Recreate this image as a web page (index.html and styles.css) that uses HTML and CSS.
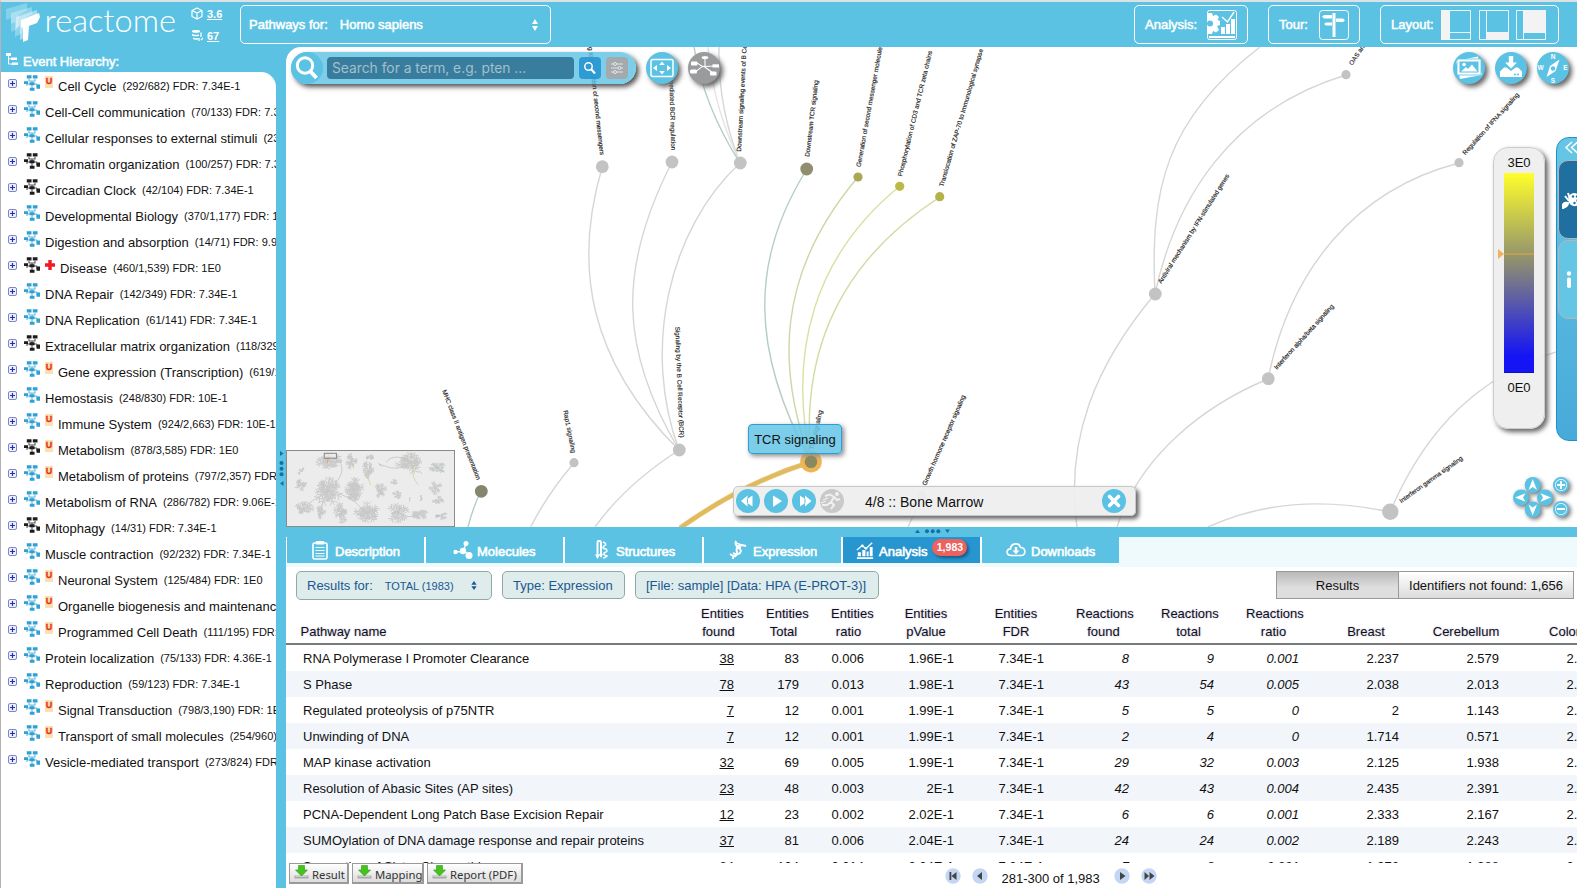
FILE: index.html
```html
<!DOCTYPE html>
<html lang="en">
<head>
<meta charset="utf-8">
<title>Reactome Pathway Browser</title>
<link rel="stylesheet" href="styles.css">
</head>
<body>
<svg class="defs" width="0" height="0">
  <symbol id="pathway" viewBox="0 0 16 16">
    <path d="M5 4V6H11V4M8 6V14M3 9H13M3 9V11M13 9V12" fill="none" stroke="currentColor" stroke-width="1.100" opacity=".75"/>
    <path d="M2.800 .2H7.500V3.500H2.800ZM8.800 .2H13.500V3.500H8.800ZM0 6.300H4V9H0ZM5.500 7.200H10.500V10.300H5.500ZM5.800 12.800H10.500V15.800H5.800ZM12.500 9.500H16V13.700H12.500Z" fill="currentColor"/>
  </symbol>
  <symbol id="chart" viewBox="0 0 20 20">
    <path d="M1 17.500H19V19.500H1ZM2 12H5.500V16.500H2ZM7 9.500H10.500V16.500H7ZM11.800 11H14V16.500H11.800ZM15.300 6H18.500V16.500H15.300Z" fill="currentColor"/>
    <path d="M1 9.500L7 4.500L11 8L18 1.500" fill="none" stroke="currentColor" stroke-width="1.500"/><circle cx="7" cy="4.800" r="1.600" fill="currentColor"/><circle cx="11" cy="7.600" r="1.500" fill="currentColor"/>
  </symbol>
  <symbol id="save" viewBox="0 0 15 14">
    <path d="M.5 10.500H14.500V13.500H.5Z" fill="#a9a9a9"/><path d="M1.500 11.200H13.500" stroke="#ddd" stroke-width="1"/>
    <path d="M4.500 .5H10.500V5H13.500L7.500 11L1.500 5H4.500Z" fill="#45c21c" stroke="#2f9a12" stroke-width=".6"/>
  </symbol>
</svg>

<header class="top">
  <svg class="logo" width="178" height="45" viewBox="0 0 178 45">
    <path d="M5 9L26 3V10L18 15L17 29L10 32V18L5 20Z" fill="#fff" opacity=".25"/>
    <path d="M10 13L31 7V14L24 18L21 33L14 37V22L10 24Z" fill="#fff" opacity=".3"/>
    <path d="M15 17L36 10V16L28 21L25 37L19 40V26L15 28Z" fill="#fff" opacity=".45"/>
    <path d="M20 20L38 13L39 17L36 23L28 26L27 40L22 42V27L20 28Z" fill="#fff"/>
    <text x="43.500" y="32" textLength="131.500" lengthAdjust="spacingAndGlyphs" class="word">reactome</text>
  </svg>
  <div class="versions">
    <div class="ver"><svg width="12" height="13" viewBox="0 0 12 13"><path d="M6 1L11 3.500V9.500L6 12L1 9.500V3.500ZM1 3.500L6 6L11 3.500M6 6V12" fill="none" stroke="#fff" stroke-width="1.200"/></svg><u>3.6</u></div>
    <div class="ver"><svg width="12" height="13" viewBox="0 0 12 13"><path d="M1 2C1 .7 9 .7 9 2V3C9 4 1 4 1 3ZM1 5C3 6 7 6 8 5.500V7C6 7.500 3 7.500 1 6.500ZM2 8.500C4 9.500 5 9.500 7 9V10.500C5 11 3 10.500 2 10Z" fill="#fff"/><path d="M10 3.500V8M8 9V12M10 11L12 9" stroke="#fff" stroke-width="1.300"/></svg><u>67</u></div>
  </div>
  <div class="box species"><span>Pathways for:</span><span class="val">Homo sapiens</span><svg class="updown" width="8" height="12" viewBox="0 0 8 12"><path d="M4 0L7 5H1ZM1 7H7L4 12Z" fill="#fff"/></svg></div>
  <div class="spacer"></div>
  <div class="box analysis">Analysis:
    <svg width="30" height="30" viewBox="0 0 30 30"><rect x=".5" y=".5" width="29" height="29" rx="2" fill="none" stroke="#fff"/><g fill="#fff"><path d="M1 3H5L6 6L9 4.500L12 7L10.500 10L13 11V15L10 16L12 20L9 22.500L6 21L5 24H1Z"/><path d="M14 17H18V24H14ZM19 14H23V24H19ZM24 9H28V24H24ZM2 26H28V28H2Z"/></g><circle cx="3" cy="13.500" r="3" fill="#5bc2e3"/><path d="M15 7L20.500 12L27 2" fill="none" stroke="#fff" stroke-width="1.400"/></svg></div>
  <div class="box tour">Tour:
    <svg width="30" height="30" viewBox="0 0 30 30"><rect x=".5" y=".5" width="29" height="29" rx="3" fill="none" stroke="#fff"/><path d="M13.500 3H16.500V27H13.500ZM5 5H13V8.500H5L3 6.700ZM17 8.500H24L26 10.200L24 12H17ZM7 12.500H13V15.500H7L5 14Z" fill="#fff"/></svg></div>
  <div class="box layout">Layout:
    <svg width="30" height="30" viewBox="0 0 30 30"><path d="M.5 .5H29.500V29.500H.5ZM8.500 0V30M8 22.500H30" fill="none" stroke="#eaf7fb"/><path d="M0 0H8V30H0Z" fill="#f3f3f3"/></svg>
    <svg width="30" height="30" viewBox="0 0 30 30"><path d="M.5 .5H29.500V29.500H.5ZM7.500 0V30M8 22.500H30" fill="none" stroke="#eaf7fb"/><path d="M8 22H30V30H8Z" fill="#f3f3f3"/></svg>
    <svg width="30" height="30" viewBox="0 0 30 30"><path d="M.5 .5H29.500V29.500H.5ZM7.500 0V30M8 22.500H30" fill="none" stroke="#eaf7fb"/><path d="M8 0H30V22.500H8Z" fill="#f3f3f3"/></svg>
  </div>
</header>

<main class="main">
  <aside class="side">
    <h2 class="side-title"><svg width="12" height="13" viewBox="0 0 12 13"><path d="M0 0H5V3H0ZM5 4.500H11V7H5ZM6 9.500H12V12H6Z" fill="#fff"/><path d="M2.500 3V11H6M2.500 5.800H5" fill="none" stroke="#fff"/></svg>Event Hierarchy:</h2>
    <div class="tree" id="tree"></div>
  </aside>
  <div class="vsplit"><svg width="8" height="36" viewBox="0 0 8 36"><g fill="#1272a8"><path d="M3 1L6.500 3.500L3 6ZM6.500 31L3 33.500L6.500 36Z"/><circle cx="4.500" cy="13" r="2"/><circle cx="4.500" cy="18.700" r="2"/><circle cx="4.500" cy="24.300" r="2"/></g></svg></div>

  <section class="work">
    <div class="diagram">
      <svg class="graph" width="1291" height="480" viewBox="286 47 1291 480">
        <g fill="none" stroke="#d6d6d6" stroke-width="1.400">
          <path d="M602.300 166.700C573 265 588 360 679 450"/><path d="M672 162C617 270 620 350 679 450"/><path d="M740 163C668 230 642 350 679 450"/>
          <path d="M679 450Q625 485 595 527"/><path d="M574 463Q548 493 530.700 527"/>
          <path d="M719 47C718 90 727 130 740 163"/><path d="M708 47C712 95 725 130 740 163" stroke="#e4e4e4"/>
          <path d="M1155 294C1150 190 1165 120 1260 47"/><path d="M1155 294C1175 200 1230 110 1346 75"/><path d="M1155 294C1095 365 1065 440 1077 527"/>
          <path d="M1268 379C1290 270 1355 190 1459 163"/><path d="M1268 379C1205 405 1140 455 1117 527"/>
          <path d="M1390 512C1320 497 1260 503 1208 527"/><path d="M1390 512C1425 430 1480 370 1577 346"/><path d="M922 496L908 527"/>
        </g>
        <g fill="none" stroke-width="1.400">
          <path d="M807 169C750 260 750 350 811 462" stroke="#b3cfc0"/><path d="M694 47C702 95 722 135 740 163" stroke="#b3cfc0"/><path d="M481 491Q473 507 468 527" stroke="#b3cfc0"/>
          <path d="M858 177C775 275 777 370 811 462" stroke="#c9d8a6"/><path d="M900 186C815 255 787 350 811 462" stroke="#dcdf9f"/><path d="M940 197C850 255 799 340 811 462" stroke="#d2dba3"/>
          <path d="M811 462Q745 482 680 528" stroke="#f2bb64" stroke-width="5"/><path d="M811 462Q745 482 680 528" stroke="#d9bd62" stroke-width="3"/>
        </g>
        <g fill="#c3c3c3">
          <circle cx="602.300" cy="166.700" r="6.400"/><circle cx="672" cy="162" r="6.400"/><circle cx="740.300" cy="163" r="6.400"/>
          <circle cx="574" cy="462.700" r="4.600"/><circle cx="679.300" cy="450" r="6.400"/><circle cx="1155.300" cy="294" r="6.400"/>
          <circle cx="1268.300" cy="378.700" r="6.400"/><circle cx="1459" cy="162.700" r="4.600"/><circle cx="1390.300" cy="511.700" r="8.200"/>
          <circle cx="1346" cy="74.700" r="4.600"/><circle cx="922" cy="495.700" r="4.600"/>
        </g>
        <circle cx="806.700" cy="169" r="6.400" fill="#8f8f70"/><circle cx="858" cy="177" r="4.600" fill="#aaa852"/>
        <circle cx="899.700" cy="186.300" r="4.600" fill="#bdb946"/><circle cx="939.700" cy="196.700" r="4.600" fill="#b4b04a"/>
        <circle cx="481.300" cy="491.300" r="6.400" fill="#86866f"/>
        <circle cx="811" cy="461.700" r="10.800" fill="#f0b455"/><circle cx="811" cy="461.700" r="6.300" fill="#89895c"/>
        <g class="labels">
          <text transform="translate(809.300 157)rotate(-83.300)" textLength="77">Downstream TCR signaling</text>
          <text transform="translate(860.500 167.300)rotate(-79.700)">Generation of second messenger molecules</text>
          <text transform="translate(902 176.700)rotate(-76.400)" textLength="129">Phosphorylation of CD3 and TCR zeta chains</text>
          <text transform="translate(943.300 187)rotate(-73.800)" textLength="143">Translocation of ZAP-70 to Immunological synapse</text>
          <text transform="translate(741 151.700)rotate(-87)">Downstream signaling events of B Cell Receptor (BCR)</text>
          <text transform="translate(600 155.300)rotate(83.800)" text-anchor="end">Antigen activates B Cell Receptor (BCR) leading to generation of second messengers</text>
          <text transform="translate(671.300 150.300)rotate(88.500)" text-anchor="end">CD22 mediated BCR regulation</text>
          <text transform="translate(675.300 326.700)rotate(87.800)" textLength="111">Signaling by the B Cell Receptor (BCR)</text>
          <text transform="translate(563.300 410.700)rotate(79)" textLength="43.400">Rap1 signaling</text>
          <text transform="translate(442 390.700)rotate(68.800)" textLength="96">MHC class II antigen presentation</text>
          <text transform="translate(813.500 450)rotate(-77)">TCR signaling</text>
          <text transform="translate(926 486)rotate(-66.200)" textLength="98">Growth hormone receptor signaling</text>
          <text transform="translate(1352.300 65.700)rotate(-56)">OAS antiviral response</text>
          <text transform="translate(1465.300 155.300)rotate(-48)" textLength="81">Regulation of IFNA signaling</text>
          <text transform="translate(1161.300 284)rotate(-57.800)" textLength="128">Antiviral mechanism by IFN-stimulated genes</text>
          <text transform="translate(1276.700 370)rotate(-47.800)" textLength="85.500">Interferon alpha/beta signaling</text>
          <text transform="translate(1401.300 503.300)rotate(-35.400)" textLength="76">Interferon gamma signaling</text>
        </g>
      </svg>

      <div class="search">
        <span class="search-ico"><svg width="32" height="32" viewBox="0 0 32 32"><circle cx="14" cy="13.500" r="7.700" fill="none" stroke="#fff" stroke-width="3"/><path d="M19.500 19.500L25.500 26" stroke="#fff" stroke-width="4"/></svg></span>
        <span class="field">Search for a term, e.g. pten ...</span>
        <span class="sbtn go"><svg width="22" height="22" viewBox="0 0 22 22"><circle cx="9.500" cy="9.500" r="3.700" fill="none" stroke="#fff" stroke-width="1.500"/><path d="M12 12L16 16.500" stroke="#fff" stroke-width="2.200"/></svg></span>
        <span class="sbtn opt"><svg width="22" height="22" viewBox="0 0 22 22"><path d="M5 7H17M5 11H17M5 15H17" stroke="#e6e6e6" stroke-width="1.200"/><g fill="#a8a8a8" stroke="#e6e6e6"><circle cx="9" cy="7" r="1.500"/><circle cx="13.500" cy="11" r="1.500"/><circle cx="9" cy="15" r="1.500"/></g></svg></span>
      </div>
      <div class="round fit"><svg width="32" height="32" viewBox="0 0 32 32"><rect x="5" y="7.500" width="22" height="17" rx="2" fill="none" stroke="#fff" stroke-width="1.500"/><path d="M16 9.500L18.800 13H13.200ZM16 22.500L18.800 19H13.200ZM7 16L11 13V19ZM25 16L21 13V19Z" fill="#fff"/></svg></div>
      <div class="round gray"><svg width="32" height="32" viewBox="0 0 32 32"><path d="M8 11C13 11.500 11 14.500 16 14.500L28 14M7 19C11 19 11 15.500 15 14.500M16 14.500L25 21M17 5V14.500" fill="none" stroke="#fff" stroke-width="1.100"/><g fill="#fff"><ellipse cx="17" cy="5.500" rx="3.300" ry="1.500"/><rect x="3" y="9.500" width="6.500" height="4" rx="1"/><rect x="2" y="17.500" width="7" height="4" rx="1.500"/><rect x="24.500" y="12.300" width="6.500" height="3.200"/><rect x="22" y="19.500" width="6.500" height="4" rx="1"/></g></svg></div>
      <div class="round pic"><svg width="32" height="32" viewBox="0 0 32 32"><path d="M3 9L25 4.500L29 23L7 27Z" fill="#fff"/><rect x="4" y="7" width="24" height="16" fill="#fff" stroke="#5bc2e3" stroke-width=".8"/><rect x="6.500" y="9.500" width="19" height="11" fill="#5bc2e3"/><circle cx="11" cy="12.500" r="1.800" fill="#fff"/><path d="M8 19.500L13 15L15 17L19 12.500L24.500 19.500Z" fill="#fff"/></svg></div>
      <div class="round down"><svg width="32" height="32" viewBox="0 0 32 32"><path d="M13.800 4H18.200V10.500H22L16 16.500L10 10.500H13.800ZM5 19.500L9 15.500H11.500L16 19L20.500 15.500H23L27 19.500V25H5Z" fill="#fff"/><path d="M19 22.500H24" stroke="#5bc2e3" stroke-width="1.500" stroke-dasharray="2 1"/></svg></div>
      <div class="round compass"><svg width="32" height="32" viewBox="0 0 32 32"><path d="M22.500 7.500L18.500 19L9.500 25L13 14Z" fill="#fff"/><circle cx="16" cy="16.500" r="2.200" fill="#5bc2e3"/><g class="nsew"><text x="16" y="6.800">N</text><text x="16" y="31">S</text><text x="3.500" y="18.200">W</text><text x="28.500" y="18.200">E</text></g></svg></div>

      <div class="legend"><span>3E0</span><div class="ramp"><i class="mark"></i></div><span>0E0</span></div>
      <div class="settings">
        <svg class="chev" width="16" height="14" viewBox="0 0 16 14"><path d="M9 1L3 6.500L9 12M14.500 1L8.500 6.500L14.500 12" fill="none" stroke="#fff" stroke-width="1.500"/></svg>
        <div class="stab dark"><svg width="18" height="18" viewBox="0 0 18 18"><path d="M9 3C14 0 19 4 18 10C17 16 12 16 9 14C6 12 5 5 9 3Z" fill="#fff"/><path d="M3 5L7 10M6 2L8 8M1 17C0 13 2 11 6 12C6 15 4 16 1 17Z" fill="#fff" stroke="#fff" stroke-width="2"/><g fill="#1f70a0"><circle cx="11" cy="5.500" r="1.200"/><circle cx="15" cy="5.500" r="1.200"/><circle cx="15.500" cy="9.500" r="1.200"/><circle cx="12.500" cy="12" r="1.200"/></g></svg></div>
        <div class="stab light"><svg width="16" height="18" viewBox="0 0 16 18"><circle cx="9" cy="2.500" r="2.200" fill="#fff"/><rect x="7" y="6.500" width="4" height="10.500" rx="1.800" fill="#fff"/></svg></div>
      </div>
      <svg class="nav" width="66" height="46" viewBox="1511 474 66 46">
        <g fill="#5bc2e3"><circle cx="1532.700" cy="485" r="8"/><circle cx="1521" cy="497.500" r="8"/><circle cx="1545" cy="497.500" r="8"/><circle cx="1532.700" cy="509.500" r="8"/></g>
        <path d="M1532.700 479L1537 490L1532.700 487L1528.500 490ZM1532.700 515.500L1537 504.500L1532.700 507.500L1528.500 504.500ZM1515 497.500L1525.500 493.200L1523 497.500L1525.500 501.700ZM1551 497.500L1540.500 493.200L1543 497.500L1540.500 501.700Z" fill="#fff"/>
        <g fill="#fff" stroke="#5bc2e3" stroke-width="2"><circle cx="1561" cy="485" r="7"/><circle cx="1561" cy="509" r="7"/></g>
        <g fill="#5bc2e3"><circle cx="1561" cy="485" r="5.300"/><circle cx="1561" cy="509" r="5.300"/></g>
        <path d="M1557 485H1565M1561 481V489M1557 509H1565" stroke="#fff" stroke-width="1.800"/>
      </svg>
      <div class="tip">TCR signaling</div>
      <div class="player">
        <svg width="108" height="24" viewBox="0 0 108 24"><g fill="#5bc2e3"><circle cx="12" cy="12" r="12"/><circle cx="40" cy="12" r="12"/><circle cx="68" cy="12" r="12"/></g><circle cx="96" cy="12" r="12" fill="#c9c9c9"/>
          <path d="M5 12L11.500 6.500V10L16.500 6.500V17.500L11.500 14V17.500ZM37 6.500L46 12L37 18ZM75.500 12L69 6.500V10L64 6.500V17.500L69 14V17.500Z" fill="#fff"/>
          <path d="M11.500 10V14M69 10V14" stroke="#5bc2e3"/>
          <g fill="none" stroke="#f0f0f0" stroke-width="2"><path d="M89 7L94 5.500L98 8L95 13L98 16L95 20M95 13L91 16H86M98 8L101 11L104 10"/><path d="M87 11L92 9M85 14L90 12" stroke-width="1.300"/></g><circle cx="101" cy="5" r="2" fill="#f0f0f0"/></svg>
        <span class="tissue">4/8 :: Bone Marrow</span>
        <svg width="24" height="24" viewBox="0 0 24 24"><circle cx="12" cy="12" r="12" fill="#5bc2e3"/><path d="M7.500 7.500L16.500 16.500M16.500 7.500L7.500 16.500" stroke="#fff" stroke-width="3.600" stroke-linecap="round"/></svg>
      </div>
      <svg class="thumb" id="thumb" width="169" height="77" viewBox="18 450 507 231"></svg>
    </div>

    <div class="hsplit"><svg width="36" height="8" viewBox="0 0 36 8"><g fill="#1272a8"><path d="M1 6L3.500 2.500L6 6ZM31 2.500H36L33.500 6Z"/><circle cx="13" cy="4.300" r="2"/><circle cx="18.700" cy="4.300" r="2"/><circle cx="24.300" cy="4.300" r="2"/></g></svg></div>

    <nav class="tabs">
      <div class="tab t1"><svg width="16" height="20" viewBox="0 0 16 20"><rect x="1" y="3" width="14" height="16" rx="1.500" fill="none" stroke="#fff" stroke-width="1.600"/><path d="M4 1H12V4.500H4Z" fill="#fff"/><path d="M3.500 7.500H12.500M3.500 10.500H12.500M3.500 13.500H12.500M3.500 16H12.500" stroke="#fff"/></svg>Description</div>
      <div class="tab t2"><svg width="20" height="20" viewBox="0 0 20 20"><path d="M2.500 12L10 11.500L13 4M10 10L16 15" fill="none" stroke="#fff" stroke-width="1.300"/><g fill="#fff"><circle cx="2.500" cy="12" r="2.200"/><circle cx="10" cy="11" r="3.200"/><circle cx="13" cy="3.500" r="2.500"/><circle cx="16" cy="15.500" r="3.500"/></g></svg>Molecules</div>
      <div class="tab t3"><svg width="14" height="20" viewBox="0 0 14 20"><path d="M2.500 16V3C2.500 0 6 0 6 3V17" fill="none" stroke="#fff" stroke-width="2"/><path d="M0 14.500H5L2.500 19ZM4 14H8L6 18Z" fill="#fff"/><path d="M8 2Q13 4 9 6Q6 8 11 9Q14 11 9 13Q8 15 12 16Q10 18 8 18" fill="none" stroke="#fff" stroke-width="1.500"/></svg>Structures</div>
      <div class="tab t4"><svg width="18" height="20" viewBox="0 0 18 20"><path d="M7 1C4 8 15 8 11 13C9 15 4 13 4 19M17 6C11 4 6 7 8 12C9 16 5 17 1 14" fill="none" stroke="#fff" stroke-width="2"/><path d="M7 3L14 5.500M7 5.500L12 8M4 13L9 14.500M3 15.500L7 16.500" fill="none" stroke="#fff" stroke-width="1.500"/></svg>Expression</div>
      <div class="tab t5 on"><svg width="18" height="19" viewBox="0 0 20 20"><use href="#chart"/></svg>Analysis<b class="badge">1,983</b></div>
      <div class="tab t6"><svg width="20" height="16" viewBox="0 0 20 16"><path d="M5.500 13.500C-.5 13.500 0 6.500 4.500 7C5 1 13 0 14.500 5.500C20 5.500 20.500 13.500 15 13.500Z" fill="none" stroke="#fff" stroke-width="1.700"/><path d="M8.800 5H11.200V8.500H13.500L10 12.300L6.500 8.500H8.800Z" fill="#fff"/></svg>Downloads</div>
    </nav>

    <div class="panel">
      <div class="filters">
        <div class="pill p1">Results for:<span class="small">TOTAL (1983)</span><svg width="6" height="11" viewBox="0 0 8 12"><path d="M4 0L7.500 5H.5ZM.5 7H7.500L4 12Z" fill="#1b5790"/></svg></div>
        <div class="pill p2">Type: Expression</div>
        <div class="pill p3">[File: sample] [Data: HPA (E-PROT-3)]</div>
        <div class="seg"><div class="sbt sel">Results</div><div class="sbt">Identifiers not found: 1,656</div></div>
      </div>
      <div class="row head"><span>Pathway name</span><span>Entities found</span><span>Entities Total</span><span>Entities ratio</span><span>Entities pValue</span><span>Entities FDR</span><span>Reactions found</span><span>Reactions total</span><span>Reactions ratio</span><span>Breast</span><span>Cerebellum</span><span>Colon</span></div>
      <div class="rows" id="rows"></div>
      <footer class="foot">
        <div class="btn b1"><svg width="15" height="14"><use href="#save"/></svg>Result</div>
        <div class="btn b2"><svg width="15" height="14"><use href="#save"/></svg>Mapping</div>
        <div class="btn b3"><svg width="15" height="14"><use href="#save"/></svg>Report (PDF)</div>
        <div class="pager">
          <svg width="16" height="16" viewBox="0 0 16 16"><circle cx="8" cy="8" r="7.700" fill="#c3d6f3"/><path d="M4.500 4H6.300V12H4.500ZM11.500 4V12L6.500 8Z" fill="#444"/></svg>
          <svg width="16" height="16" viewBox="0 0 16 16"><circle cx="8" cy="8" r="7.700" fill="#c3d6f3"/><path d="M10 4V12L5 8Z" fill="#444"/></svg>
          <span class="range">281-300 of 1,983</span>
          <svg width="16" height="16" viewBox="0 0 16 16"><circle cx="8" cy="8" r="7.700" fill="#c3d6f3"/><path d="M6 4V12L11.500 8Z" fill="#444"/></svg>
          <svg width="16" height="16" viewBox="0 0 16 16"><circle cx="8" cy="8" r="7.700" fill="#c3d6f3"/><path d="M3.500 4V12L8 8ZM8.500 4V12L13.500 8Z" fill="#444"/></svg>
        </div>
      </footer>
    </div>
  </section>
</main>
<script src="app.js"></script>
</body>
</html>
```
FILE: styles.css
```css
* { box-sizing: border-box; }
body { margin: 0; width: 1577px; height: 888px; overflow: hidden; font: 13px "Liberation Sans", Arial, sans-serif; color: #111; background: #5bc2e3; border-left: 1px solid #b4b4b4; border-top: 2px solid #d9e2e5; display: flex; flex-direction: column; }
.defs { position: absolute; }
svg { display: block; flex: none; }
.top { height: 45px; flex: none; display: flex; align-items: flex-start; padding: 3px 18px 0 0; color: #fff; -webkit-text-stroke: .5px #fff; }
.logo { margin-top: -5px; }
.word { font: 300 32px Lato, sans-serif; fill: #fff; -webkit-text-stroke: .4px #fff; }
.versions { display: flex; flex-direction: column; gap: 9px; margin: 2px 0 0 12px; width: 48px; font-size: 11px; font-weight: bold; -webkit-text-stroke: 0; }
.ver { display: flex; align-items: center; gap: 4px; height: 13px; }
.box { height: 39px; border: 1px solid #fff; border-radius: 5px; display: flex; align-items: center; justify-content: space-between; padding: 0 10px; }
.species { width: 311px; margin-left: 1px; justify-content: flex-start; padding: 0 11px 0 8px; }
.species .val { margin-left: 12px; }
.updown { margin-left: auto; }
.spacer { flex: 1; }
.analysis { width: 114px; margin-right: 20px; }
.tour { width: 92px; margin-right: 20px; }
.layout { width: 179px; padding-right: 12px; }

.main { flex: 1; display: flex; min-height: 0; }
.side { width: 275px; display: flex; flex-direction: column; }
.side-title { margin: 0; height: 25px; padding: 3px 0 0 5px; display: flex; align-items: center; gap: 5px; font-size: 13px; font-weight: normal; color: #fff; -webkit-text-stroke: .5px #fff; }
.side-title svg { margin-top: -3px; }
.tree { flex: 1; background: #fff; border-top-right-radius: 15px; overflow: hidden; padding: 1px 0 0 7px; }
.node { display: flex; align-items: center; height: 26px; white-space: nowrap; }
.node .plus { margin: -6px 7px 0 0; flex: none; width: 9px; height: 9px; }
.node .pw { margin-top: -7px; margin-right: 5px; color: #2fa0d3; }
.node .pw.dis { color: #1c1c1c; }
.node .upd { flex: none; width: 8px; height: 12px; margin: -8px 5px 0 0; background: #fde0b2; color: #e8321a; font: bold 9px/10px "Liberation Sans", sans-serif; text-align: center; -webkit-text-stroke: .3px #e8321a; }
.node .cross { margin: -6px 5px 0 0; }
.node small { font-size: 11px; margin-left: 6px; letter-spacing: .02px; }
.vsplit { width: 10px; padding: 403px 0 0 1px; }

.work { flex: 1; min-width: 0; display: flex; flex-direction: column; }
.diagram { height: 480px; flex: none; position: relative; background: #fff; border-top-left-radius: 15px; overflow: hidden; }
.graph { position: absolute; inset: 0; }
.labels { font: 6.4px "Liberation Sans", sans-serif; fill: #222; stroke: #222; stroke-width: .15px; }
.search { position: absolute; left: 5px; top: 5px; width: 345px; height: 32px; border-radius: 16px; background: rgba(91,194,227,.8); box-shadow: 3px 3px 5px #555; display: flex; align-items: center; }
.search-ico { width: 32px; height: 32px; border-radius: 50%; background: #5bc2e3; margin-right: 4px; }
.field { width: 247px; height: 22px; border-radius: 4px; background: #387d9d; color: #a3c0cc; font: 13.800px/23px Inter, sans-serif; padding-left: 5px; white-space: nowrap; }
.sbtn { width: 22px; height: 22px; border-radius: 4px; margin-left: 5px; }
.go { background: rgba(34,146,208,.85); }
.opt { background: #a3a9ac; }
.round { position: absolute; top: 5px; width: 32px; height: 32px; border-radius: 50%; background: #5bc2e3; box-shadow: 3px 3px 5px #666; }
.fit { left: 360px; }
.gray { left: 402px; background: #9a9b9d; }
.pic { left: 1167px; }
.down { left: 1209px; }
.compass { left: 1251px; }
.nsew { font: bold 6.500px "Liberation Sans", sans-serif; fill: #fff; text-anchor: middle; }
.legend { position: absolute; left: 1207px; top: 100px; width: 52px; height: 282px; border: 1px solid #ccc; border-radius: 15px; background: rgba(238,238,238,.93); box-shadow: 3px 3px 5px #666; display: flex; flex-direction: column; align-items: center; padding-top: 7px; line-height: 15px; }
.ramp { position: relative; width: 30px; height: 200px; margin: 3px 0 7px; background: linear-gradient(#ffff2b, #8f8f70 44%, #1414f5 92%); border-bottom: 1px solid #1010c8; }
.mark { position: absolute; left: 0; top: 80px; width: 30px; height: 2px; background: #c0a050; }
.mark::before { content: ""; position: absolute; left: -6px; top: -4px; border-left: 6px solid #efb45a; border-top: 5px solid transparent; border-bottom: 5px solid transparent; }
.settings { position: absolute; left: 1270px; top: 90px; width: 40px; height: 304px; border: 1px solid #1d90cb; border-radius: 13px; background: linear-gradient(#66c6e5, #47aad9); padding: 0 0 0 1px; }
.chev { margin: 3px 0 5px 5px; }
.stab { width: 40px; height: 79px; margin-bottom: 1px; border: 1px solid #b5b5b5; border-radius: 10px; padding: 30px 0 0 3px; }
.dark { background: #1f70a0; }
.light { background: #64c5e4; padding-left: 1px; }
.nav { position: absolute; left: 1225px; top: 427px; filter: drop-shadow(2px 2px 2px #777); }
.tip { position: absolute; left: 462px; top: 377px; width: 94px; height: 30px; border: 1px solid #2a9fd6; border-radius: 4px; background: rgba(103,198,230,.87); box-shadow: 2px 2px 5px #888; text-align: center; line-height: 29px; }
.player { position: absolute; left: 447px; top: 439px; width: 403px; height: 30px; border: 1px solid #c8c8c8; border-radius: 5px; background: rgba(238,238,238,.93); box-shadow: 3px 3px 4px #666; display: flex; align-items: center; padding: 0 9px 0 2px; }
.tissue { flex: 1; font-size: 14px; padding: 2px 0 0 21px; }
.thumb { position: absolute; left: 0; top: 403px; border: 1px solid #8a8a8a; background: #ececec; }
.hsplit { height: 10px; flex: none; padding: 0 0 0 628px; }
.tabs { height: 30px; flex: none; display: flex; gap: 2px; background: linear-gradient(#fff 26px, #effafc 26px); padding-left: 1px; }
.tabs::after { content: ""; flex: 1; margin-left: -2px; background: #effafc; }
.tab { width: 137px; height: 26px; background: #5bc2e3; color: #fff; -webkit-text-stroke: .6px #fff; display: flex; align-items: center; padding-top: 3px; }
.tab svg { margin-top: -3px; }
.t1 { padding-left: 25px; } .t1 svg { margin-right: 7px; }
.t2 { padding-left: 27px; } .t2 svg { margin-right: 4px; }
.t3 { padding-left: 30px; } .t3 svg { margin-right: 7px; }
.t4 { padding-left: 25px; } .t4 svg { margin-right: 6px; }
.t5 { padding-left: 13px; } .t5 svg { margin-right: 5px; }
.t6 { padding-left: 24px; } .t6 svg { margin-right: 5px; }
.on { background: #2795cf; }
.badge { margin: -8px 0 0 5px; width: 35px; height: 17px; border-radius: 9px; background: #ec625f; font-size: 10.500px; line-height: 17px; text-align: center; -webkit-text-stroke: 0; box-shadow: 2px 2px 3px #1b5a85; }
.panel { flex: 1; background: #fff; display: flex; flex-direction: column; min-height: 0; overflow: hidden; }
.filters { height: 37px; flex: none; display: flex; align-items: flex-start; gap: 10px; padding: 4px 3px 0 10px; }
.pill { height: 28px; border: 1px solid #8fa9a9; border-radius: 5px; background: #deecec; color: #1b5790; display: flex; align-items: center; padding: 0 10px; white-space: nowrap; }
.p1 { width: 196px; height: 29px; padding-right: 14px; }
.p2 { width: 123px; }
.p3 { width: 244px; }
.small { font-size: 11px; margin-left: 12px; }
.p1 svg { margin-left: auto; }
.seg { margin-left: auto; display: flex; }
.sbt { width: 176px; height: 28px; border: 1px solid #999; background: linear-gradient(#fff, #dcdcdc); text-align: center; line-height: 27px; }
.sel { width: 122px; background: linear-gradient(#b9b9b9, #dedede 60%); border-right: 0; }
.row { display: grid; grid-template-columns: 400.500px 65px 65px 65px 90px 90px 85px 85px 85px 100px 100px 100px; width: 1331px; }
.row span { padding: 0 17.500px 0 14.500px; text-align: right; line-height: 28px; white-space: nowrap; }
.row span:first-child { text-align: left; padding-left: 17px; }
.row span:nth-child(2) { text-decoration: underline; }
.rows .row span:nth-child(n+7):nth-child(-n+9) { font-style: italic; }
.head { height: 41px; flex: none; align-items: end; border-bottom: 2px solid #757b7b; padding-bottom: 2px; }
.row.head span { padding: 0 15.500px 0 14.500px; line-height: 18px; white-space: normal; text-align: center; text-decoration: none; text-shadow: 0 0 2px #b5b0e0; }
.row.head span:first-child { text-align: left; }
.rows { height: 218px; flex: none; overflow: hidden; }
.rows .row { height: 26px; }
.rows .row:nth-child(even) { background: #f2f6fb; }
.foot { height: 25px; display: flex; gap: 3px; padding-left: 3px; align-items: flex-start; }
.btn { height: 21px; border: 1px solid #9a9a9a; border-right-width: 2px; border-bottom-width: 2px; background: linear-gradient(#fff, #dcdcdc); font: 11.300px/14px "Noto Sans", sans-serif; color: #333; display: flex; align-items: center; padding: 4px 0 0 4px; white-space: nowrap; }
.btn svg { margin: -7px 3px 0 0; }
.b1 { width: 60px; } .b2 { width: 72px; } .b3 { width: 96px; }
.pager { display: flex; gap: 11px; margin: 5px 0 0 418.500px; }
.pager .range { width: 98px; margin: 3px 3px 0 3px; white-space: nowrap; }
```
FILE: app.js
```js
const tree = [
  ["Cell Cycle", "(292/682) FDR: 7.34E-1", "u"], ["Cell-Cell communication", "(70/133) FDR: 7.34E-1", ""],
  ["Cellular responses to external stimuli", "(237/579) FDR: 7.34E-1", ""], ["Chromatin organization", "(100/257) FDR: 7.34E-1", "d"],
  ["Circadian Clock", "(42/104) FDR: 7.34E-1", "d"], ["Developmental Biology", "(370/1,177) FDR: 1E0", ""],
  ["Digestion and absorption", "(14/71) FDR: 9.9E-1", ""], ["Disease", "(460/1,539) FDR: 1E0", "dx"],
  ["DNA Repair", "(142/349) FDR: 7.34E-1", ""], ["DNA Replication", "(61/141) FDR: 7.34E-1", ""],
  ["Extracellular matrix organization", "(118/329) FDR: 7.34E-1", "d"], ["Gene expression (Transcription)", "(619/1,843) FDR: 1E0", "u"],
  ["Hemostasis", "(248/830) FDR: 10E-1", ""], ["Immune System", "(924/2,663) FDR: 10E-1", "u"],
  ["Metabolism", "(878/3,585) FDR: 1E0", "du"], ["Metabolism of proteins", "(797/2,357) FDR: 1E0", "u"],
  ["Metabolism of RNA", "(286/782) FDR: 9.06E-1", ""], ["Mitophagy", "(14/31) FDR: 7.34E-1", "d"],
  ["Muscle contraction", "(92/232) FDR: 7.34E-1", ""], ["Neuronal System", "(125/484) FDR: 1E0", "u"],
  ["Organelle biogenesis and maintenance", "(130/325) FDR: 7.34E-1", "u"], ["Programmed Cell Death", "(111/195) FDR: 7.34E-1", "u"],
  ["Protein localization", "(75/133) FDR: 4.36E-1", ""], ["Reproduction", "(59/123) FDR: 7.34E-1", ""],
  ["Signal Transduction", "(798/3,190) FDR: 1E0", "u"], ["Transport of small molecules", "(254/960) FDR: 1E0", "u"],
  ["Vesicle-mediated transport", "(273/824) FDR: 7.34E-1", ""]
];
const plus = '<svg class="plus" viewBox="0 0 9 9"><rect x=".5" y=".5" width="8" height="8" rx="1.500" fill="#eef1fb" stroke="#7c89bd"/><path d="M2 4.500H7M4.500 2V7" stroke="#2028d8" stroke-width="1.200"/></svg>';
document.getElementById("tree").innerHTML = tree.map(([name, stat, f]) =>
  `<div class="node">${plus}<svg class="pw${f.includes("d") ? " dis" : ""}" width="16" height="16"><use href="#pathway"/></svg>` +
  (f.includes("u") ? '<span class="upd">U</span>' : "") +
  (f.includes("x") ? '<svg class="cross" width="10" height="10" viewBox="0 0 10 10"><path d="M3.300 0H6.700V3.300H10V6.700H6.700V10H3.300V6.700H0V3.300H3.300Z" fill="#ee1c25"/></svg>' : "") +
  `<span>${name}</span><small>${stat}</small></div>`).join("");

const rows = [
  "RNA Polymerase I Promoter Clearance|38|83|0.006|1.96E-1|7.34E-1|8|9|0.001|2.237|2.579|2.342",
  "S Phase|78|179|0.013|1.98E-1|7.34E-1|43|54|0.005|2.038|2.013|2.128",
  "Regulated proteolysis of p75NTR|7|12|0.001|1.99E-1|7.34E-1|5|5|0|2|1.143|2.286",
  "Unwinding of DNA|7|12|0.001|1.99E-1|7.34E-1|2|4|0|1.714|0.571|2.143",
  "MAP kinase activation|32|69|0.005|1.99E-1|7.34E-1|29|32|0.003|2.125|1.938|2.250",
  "Resolution of Abasic Sites (AP sites)|23|48|0.003|2E-1|7.34E-1|42|43|0.004|2.435|2.391|2.522",
  "PCNA-Dependent Long Patch Base Excision Repair|12|23|0.002|2.02E-1|7.34E-1|6|6|0.001|2.333|2.167|2.417",
  "SUMOylation of DNA damage response and repair proteins|37|81|0.006|2.04E-1|7.34E-1|24|24|0.002|2.189|2.243|2.324",
  "Separation of Sister Chromatids|84|194|0.014|2.04E-1|7.34E-1|7|8|0.001|1.976|1.988|2.083"
];
document.getElementById("rows").innerHTML = rows.map(r =>
  `<div class="row">${r.split("|").map(c => `<span>${c}</span>`).join("")}</div>`).join("");

/* Overview: one radial burst per top-level pathway, [x, y, rx, ry, branches] */
const bursts = [[148,482,50,30,17],[213,482,20,28,11],[268,470,15,9,7],[265,512,22,32,12],[393,485,52,36,20],[478,500,34,24,9],[57,510,12,14,4],[60,553,22,20,9],[140,572,46,46,24],[220,568,32,38,24],[302,573,20,26,12],[345,545,12,11,5],[355,585,20,14,6],[472,565,24,22,9],[65,628,36,26,12],[118,640,20,24,10],[183,640,26,34,14],[262,640,46,36,22],[357,640,36,34,15],[420,645,32,22,11],[480,603,20,15,7],[490,650,22,13,6],[427,598,5,13,2],[392,600,2,8,2]];
let seed = 11;
const rnd = () => (seed = (seed * 16807) % 2147483647) / 2147483647;
let d = "";
for (const [x, y, rx, ry, n] of bursts) {
  for (let i = 0; i < n; i++) {
    const a = (i + rnd() * .8) / n * 6.283, k = .4 + rnd() * .65;
    const at = (t, s) => `${(x + Math.cos(a + s) * rx * k * t).toFixed(1)} ${(y + Math.sin(a + s) * ry * k * t).toFixed(1)}`;
    d += `M${x} ${y}L${at(1, 0)}`;
    for (const [t, s] of [[.45, .35], [.45, -.35], [.7, .28], [.7, -.28]]) d += `M${at(t, 0)}L${at(t + .28, s)}`;
  }
}
document.getElementById("thumb").innerHTML =
  `<g fill="none" stroke="#c8c8c8" stroke-width="2.800"><path d="${d}"/><path d="M160 470C195 490 190 530 150 560M140 572C100 600 80 610 65 625M140 575C125 600 120 620 120 640M145 570C200 590 235 605 250 640M395 485C360 515 320 500 300 490M395 480C350 460 330 470 320 485M357 640C390 660 410 650 420 645"/></g>` +
  `<g fill="none" stroke-width="2"><path d="M400 488C398 520 405 540 420 555M398 460V475M262 530L272 555M216 490L220 505" stroke="#c9cf8a"/><path d="M465 495L500 515M430 520L420 510M422 605L432 595M296 488L306 498" stroke="#8fbcb0"/><path d="M472 648H485M340 548L347 555M38 563H46M350 630L358 640" stroke="#9db7ea"/><path d="M138 487L142 470L132 475" stroke="#f39a55" stroke-width="3"/></g>` +
  `<rect x="129" y="457" width="38" height="15" fill="#f4f4f4" fill-opacity=".5" stroke="#777" stroke-width="2.500"/>`;
```
